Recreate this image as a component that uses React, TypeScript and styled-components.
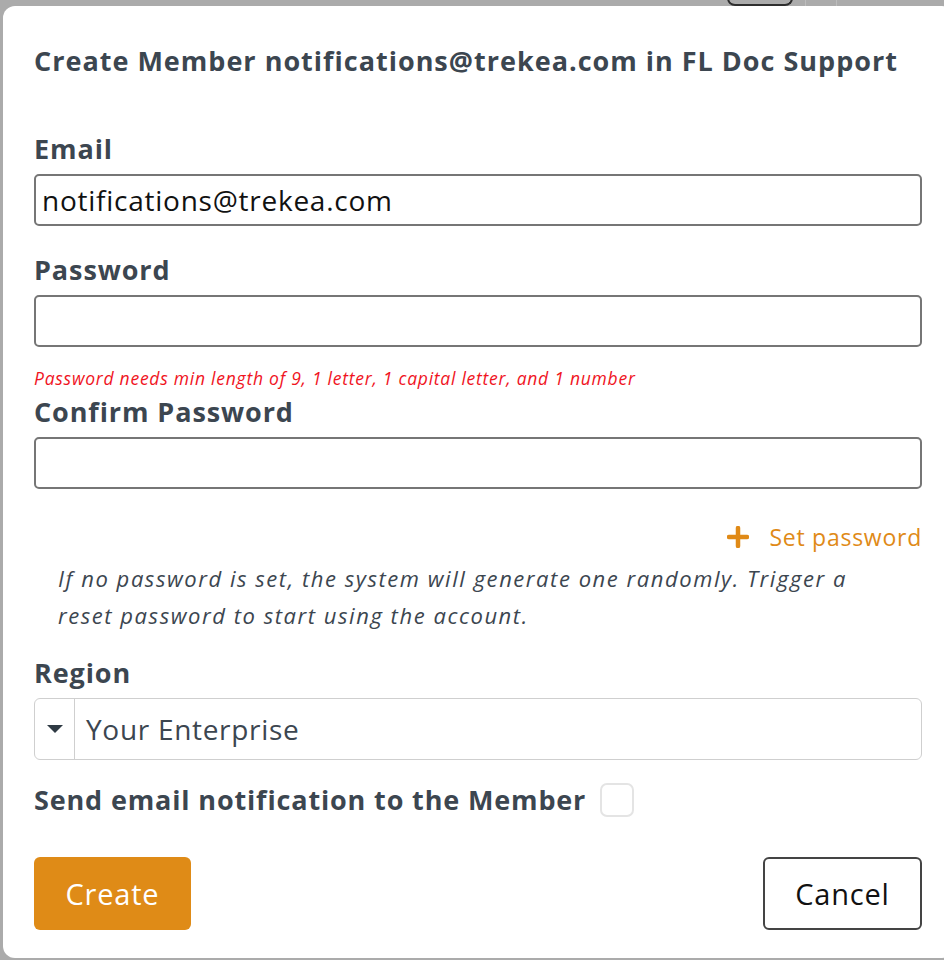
import React from "react";
import styled, { createGlobalStyle } from "styled-components";

const FONT = `"Open Sans", "Lato", sans-serif`;

const Global = createGlobalStyle`
  html, body { margin: 0; padding: 0; background: #ababab; }
  body { font-family: ${FONT}; overflow: hidden; }
  * { box-sizing: border-box; }
`;

const Screen = styled.div`
  position: relative;
  width: 944px;
  height: 960px;
  overflow: hidden;
  background: #ababab;
`;

const BackBar = styled.div`
  position: absolute;
  top: 0;
  left: 0;
  right: 0;
  height: 6px;
  display: flex;
  align-items: flex-end;
`;

const BackButton = styled.div`
  margin-left: 727px;
  width: 66px;
  height: 8px;
  border: 2px solid #2e2e2e;
  border-top: none;
  border-radius: 0 0 8px 8px;
  align-self: flex-end;
`;

const BackDivider = styled.div<{ $gap: number }>`
  margin-left: ${(p) => p.$gap}px;
  width: 1px;
  height: 6px;
  background: #bcbcbc;
`;

const Modal = styled.div`
  position: absolute;
  top: 6px;
  left: 3px;
  width: 951px;
  height: 952px;
  background: #fff;
  border-radius: 12px;
  padding: 39px 31px 0 31px;
  display: flex;
  flex-direction: column;
  color: #3c4650;
`;

const Title = styled.h1`
  margin: 0;
  font-size: 27px;
  font-weight: 700;
  letter-spacing: 1px;
  line-height: 32px;
  color: #3c4650;
  width: 900px;
  white-space: nowrap;
`;

const Form = styled.div`
  width: 888px;
  display: flex;
  flex-direction: column;
  margin-top: 56px;
`;

const Label = styled.label<{ $mt?: number }>`
  display: block;
  font-size: 27px;
  font-weight: 700;
  letter-spacing: 0.9px;
  line-height: 32px;
  margin-top: ${(p) => p.$mt ?? 0}px;
  color: #3c4650;
`;

const TextInput = styled.input`
  display: block;
  width: 100%;
  height: 52px;
  margin-top: 9px;
  border: 2px solid #767676;
  border-radius: 5px;
  padding: 0 6px;
  font-family: ${FONT};
  font-size: 28px;
  letter-spacing: 0.75px;
  color: #111;
  background: #fff;
  outline: none;
`;

const ErrorText = styled.div`
  margin-top: 20px;
  font-size: 17.5px;
  font-style: italic;
  letter-spacing: 0.75px;
  line-height: 22px;
  color: #f0141e;
  white-space: nowrap;
`;

const SetPasswordRow = styled.div`
  display: flex;
  justify-content: flex-end;
  align-items: center;
  gap: 20px;
  margin-top: 33px;
  color: #e08a17;
  font-size: 23px;
  letter-spacing: 0.75px;
  line-height: 30px;
`;

const HelpText = styled.p`
  margin: 8px 0 0 0;
  padding-left: 24px;
  width: 840px;
  font-size: 22px;
  font-style: italic;
  letter-spacing: 1.55px;
  line-height: 37px;
  color: #3c4650;
`;

const Select = styled.div`
  margin-top: 9px;
  height: 62px;
  display: flex;
  align-items: stretch;
  border: 1.5px solid #cfcfcf;
  border-radius: 6px;
`;

const Caret = styled.div`
  width: 40px;
  border-right: 1.5px solid #cfcfcf;
  display: flex;
  align-items: center;
  justify-content: center;
`;

const SelectValue = styled.div`
  display: flex;
  align-items: center;
  padding-left: 11px;
  font-size: 28px;
  letter-spacing: 0.7px;
  color: #3c4650;
`;

const CheckRow = styled.div`
  display: flex;
  align-items: center;
  gap: 14px;
  margin-top: 23px;
`;

const CheckLabel = styled.span`
  font-size: 27px;
  font-weight: 700;
  letter-spacing: 0.85px;
  line-height: 34px;
`;

const CheckBox = styled.span`
  width: 34px;
  height: 34px;
  border: 2px solid #e4e4e4;
  border-radius: 7px;
  display: inline-block;
`;

const Actions = styled.div`
  display: flex;
  justify-content: space-between;
  margin-top: 40px;
`;

const Button = styled.button<{ $primary?: boolean }>`
  height: 73px;
  width: ${(p) => (p.$primary ? 157 : 159)}px;
  border-radius: 6px;
  font-family: ${FONT};
  font-size: 29px;
  letter-spacing: 0.8px;
  cursor: pointer;
  background: ${(p) => (p.$primary ? "#df8b17" : "#fff")};
  color: ${(p) => (p.$primary ? "#fff" : "#111")};
  border: ${(p) => (p.$primary ? "none" : "2px solid #444")};
`;

export default function App() {
  return (
    <Screen>
      <Global />
      <BackBar>
        <BackButton />
        <BackDivider $gap={12} />
        <BackDivider $gap={30} />
      </BackBar>
      <Modal>
        <Title>Create Member notifications@trekea.com in FL Doc Support</Title>
        <Form>
          <Label>Email</Label>
          <TextInput defaultValue="notifications@trekea.com" />
          <Label $mt={28}>Password</Label>
          <TextInput type="password" />
          <ErrorText>Password needs min length of 9, 1 letter, 1 capital letter, and 1 number</ErrorText>
          <Label $mt={7}>Confirm Password</Label>
          <TextInput type="password" />
          <SetPasswordRow>
            <svg width="22" height="22" viewBox="0 0 22 22">
              <path d="M11 2 V20 M2 11 H20" stroke="#e08a17" strokeWidth="4.5" strokeLinecap="round" />
            </svg>
            <span>Set password</span>
          </SetPasswordRow>
          <HelpText>
            If no password is set, the system will generate one randomly. Trigger a reset password to start using the account.
          </HelpText>
          <Label $mt={23}>Region</Label>
          <Select>
            <Caret>
              <svg width="16" height="9" viewBox="0 0 16 9">
                <path d="M0 0 H16 L8 8 Z" fill="#2f3a44" />
              </svg>
            </Caret>
            <SelectValue>Your Enterprise</SelectValue>
          </Select>
          <CheckRow>
            <CheckLabel>Send email notification to the Member</CheckLabel>
            <CheckBox />
          </CheckRow>
          <Actions>
            <Button $primary>Create</Button>
            <Button>Cancel</Button>
          </Actions>
        </Form>
      </Modal>
    </Screen>
  );
}
